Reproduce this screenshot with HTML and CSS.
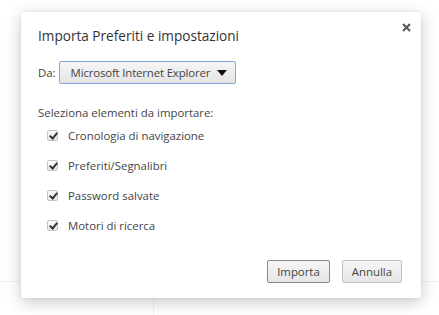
FILE: index.html
```html
<!DOCTYPE html>
<html lang="it">
<head>
<meta charset="UTF-8">
<title>Importa Preferiti e impostazioni</title>
<link rel="stylesheet" href="styles.css">
</head>
<body>
<div class="page">
    <div class="dialog">
        <button class="close" aria-label="Chiudi">
            <svg width="9" height="9" viewBox="0 0 9 9"><path d="M1 1 L8 8 M8 1 L1 8" stroke="#555" stroke-width="2"/></svg>
        </button>
        <h1>Importa Preferiti e impostazioni</h1>

        <div class="source-row">
            <span class="label">Da:</span>
            <div class="select">
                <span>Microsoft Internet Explorer</span>
                <span class="arrow"></span>
            </div>
        </div>

        <p class="section">Seleziona elementi da importare:</p>
        <ul class="items">
            <li><span class="check"></span>Cronologia di navigazione</li>
            <li><span class="check"></span>Preferiti/Segnalibri</li>
            <li><span class="check"></span>Password salvate</li>
            <li><span class="check"></span>Motori di ricerca</li>
        </ul>

        <div class="buttons">
            <button class="btn default">Importa</button>
            <button class="btn">Annulla</button>
        </div>
    </div>
</div>
</body>
</html>
```

FILE: styles.css
```css
body {
    margin: 0; font-family: "Open Sans", "Noto Sans", sans-serif; color: #333;
    background:
        linear-gradient(#f0f0f0, #f0f0f0) 0 281px / 100% 1px no-repeat,
        linear-gradient(#f0f0f0, #f0f0f0) 153px 298px / 1px 100% no-repeat,
        #fff;
}
.page { padding: 12px 0 0 21px; height: 303px; }

.dialog {
    position: relative; width: 400px; height: 286px; box-sizing: border-box;
    background: #fff; border-radius: 2px; padding: 0 19px 0 17px;
    box-shadow: 0 4px 16px rgba(0,0,0,.22), 0 0 3px rgba(0,0,0,.08);
    display: flex; flex-direction: column;
}
.close {
    position: absolute; top: 6px; right: 8px; width: 13px; height: 13px;
    padding: 2px; border: none; background: none;
}

h1 { margin: 14px 0 0; font-size: 13.6px; font-weight: 400; line-height: 20px; color: #333; }

.source-row { display: flex; align-items: center; margin-top: 15px; font-size: 11.4px; }
.label { margin-right: 3px; color: #444; }
.select {
    display: flex; align-items: center; justify-content: space-between; white-space: nowrap;
    width: 177px; height: 23px; box-sizing: border-box; padding: 0 8px 0 11px;
    border: 1px solid #7ea7db; border-radius: 2px; letter-spacing: -0.15px;
    background: linear-gradient(#f6f6f6, #e4e4e4); color: #444;
}
.arrow { width: 0; height: 0; border-left: 5px solid transparent; border-right: 5px solid transparent;
         border-top: 6px solid #111; }

.section { margin: 20px 0 0; font-size: 11.4px; line-height: 18px; color: #444; }
.items { list-style: none; margin: -2px 0 0; padding: 0 0 0 9px; font-size: 11.4px; color: #444; }
.items li { display: flex; align-items: center; height: 30px; }
.check {
    position: relative; width: 11px; height: 11px; margin-right: 10px; box-sizing: border-box;
    border: 1px solid #c4c4c4; border-radius: 2px; background: linear-gradient(#fafafa, #e8e8e8);
}
.check::after {
    content: ""; position: absolute; left: 3px; top: 0; width: 3px; height: 6px;
    border: solid #333; border-width: 0 2px 2px 0; transform: rotate(40deg);
}

.buttons { display: flex; justify-content: flex-end; gap: 12px; margin-top: auto; margin-bottom: 15px; }
.btn {
    height: 23px; padding: 0 9px; font: inherit; font-size: 11.4px; color: #444;
    border: 1px solid #c2c2c2; border-radius: 2px; background: linear-gradient(#f6f6f6, #e6e6e6);
}
.btn.default { border-color: #8a8a8a; }
```
